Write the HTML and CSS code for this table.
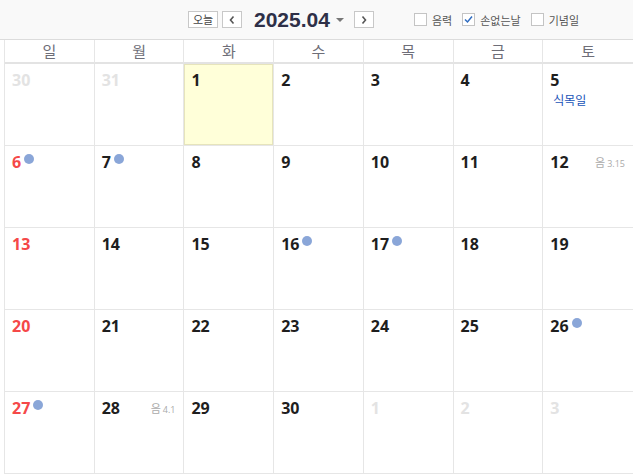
FILE: index.html
```html
<!DOCTYPE html>
<html lang="ko">
<head>
<meta charset="utf-8">
<link rel="stylesheet" href="styles.css">
</head>
<body>
<div class="topbar">
  <button class="btn today-btn">오늘</button>
  <button class="btn arrow-btn"><svg width="8" height="10" viewBox="0 0 8 10"><path d="M5.5 1.5 L2.5 5 L5.5 8.5" fill="none" stroke="#555" stroke-width="1.6"/></svg></button>
  <div class="title">2025.04</div>
  <span class="caret"></span>
  <button class="btn arrow-btn next"><svg width="8" height="10" viewBox="0 0 8 10"><path d="M2.5 1.5 L5.5 5 L2.5 8.5" fill="none" stroke="#555" stroke-width="1.6"/></svg></button>
  <div class="opts">
    <label class="opt"><span class="box"></span>음력</label>
    <label class="opt"><span class="box"><svg width="11" height="11" viewBox="0 0 11 11"><path d="M2 5.5 L4.5 8 L9 2.5" fill="none" stroke="#2f6cc0" stroke-width="1.5"/></svg></span>손없는날</label>
    <label class="opt"><span class="box"></span>기념일</label>
  </div>
</div>
<div class="cal">
  <div class="dow">일</div><div class="dow">월</div><div class="dow">화</div><div class="dow">수</div><div class="dow">목</div><div class="dow">금</div><div class="dow">토</div>

  <div class="cell"><span class="num other">30</span></div>
  <div class="cell"><span class="num other">31</span></div>
  <div class="cell today"><span class="num">1</span></div>
  <div class="cell"><span class="num">2</span></div>
  <div class="cell"><span class="num">3</span></div>
  <div class="cell"><span class="num">4</span></div>
  <div class="cell"><span class="num">5</span><div class="holiday">식목일</div></div>

  <div class="cell"><span class="num sun">6</span><span class="dot"></span></div>
  <div class="cell"><span class="num">7</span><span class="dot"></span></div>
  <div class="cell"><span class="num">8</span></div>
  <div class="cell"><span class="num">9</span></div>
  <div class="cell"><span class="num">10</span></div>
  <div class="cell"><span class="num">11</span></div>
  <div class="cell"><span class="num">12</span><span class="lunar"><span class="lk">음</span>3.15</span></div>

  <div class="cell"><span class="num sun">13</span></div>
  <div class="cell"><span class="num">14</span></div>
  <div class="cell"><span class="num">15</span></div>
  <div class="cell"><span class="num">16</span><span class="dot"></span></div>
  <div class="cell"><span class="num">17</span><span class="dot"></span></div>
  <div class="cell"><span class="num">18</span></div>
  <div class="cell"><span class="num">19</span></div>

  <div class="cell"><span class="num sun">20</span></div>
  <div class="cell"><span class="num">21</span></div>
  <div class="cell"><span class="num">22</span></div>
  <div class="cell"><span class="num">23</span></div>
  <div class="cell"><span class="num">24</span></div>
  <div class="cell"><span class="num">25</span></div>
  <div class="cell"><span class="num">26</span><span class="dot"></span></div>

  <div class="cell"><span class="num sun">27</span><span class="dot"></span></div>
  <div class="cell"><span class="num">28</span><span class="lunar"><span class="lk">음</span>4.1</span></div>
  <div class="cell"><span class="num">29</span></div>
  <div class="cell"><span class="num">30</span></div>
  <div class="cell"><span class="num other">1</span></div>
  <div class="cell"><span class="num other">2</span></div>
  <div class="cell"><span class="num other">3</span></div>
</div>
</body>
</html>
```

FILE: styles.css
```css
* { box-sizing: border-box; }
body {
  margin: 0;
  background: #fff;
  font-family: "Noto Sans CJK KR", "Noto Sans", sans-serif;
  overflow: hidden;
}
.topbar {
  height: 40px;
  background: #f9f9f9;
  border-bottom: 1px solid #dcdcdc;
  display: flex;
  align-items: center;
  padding-left: 188px;
}
.btn {
  margin: 0;
  padding: 0;
  background: #fff;
  border: 1px solid #c8c8c8;
  height: 17px;
  display: flex;
  align-items: center;
  justify-content: center;
  font-family: "Noto Sans CJK KR", sans-serif;
  font-size: 11px;
  color: #444;
  line-height: 1;
}
.today-btn { width: 30px; }
.arrow-btn { width: 20px; margin-left: 4px; }
.arrow-btn.next { margin-left: 10px; }
.title {
  margin-left: 12px;
  font-family: "Liberation Sans", Arial, sans-serif;
  font-weight: bold;
  font-size: 21px;
  color: #2e3048;
}
.caret {
  margin-left: 6px;
  width: 0;
  height: 0;
  border-left: 4px solid transparent;
  border-right: 4px solid transparent;
  border-top: 4px solid #777;
}
.opts {
  display: flex;
  margin-left: 40px;
  gap: 10px;
}
.opt {
  display: flex;
  align-items: center;
  font-size: 11px;
  color: #555;
}
.box {
  width: 13px;
  height: 13px;
  border: 1px solid #c4c4c4;
  background: #fff;
  margin-right: 5px;
  display: flex;
  align-items: center;
  justify-content: center;
}
.cal {
  margin-left: 4px;
  width: 629px;
  display: grid;
  grid-template-columns: repeat(7, 1fr);
  grid-template-rows: 24px repeat(5, 82px);
  border-left: 1px solid #e6e6e6;
}
.dow {
  border-right: 1px solid #e6e6e6;
  border-bottom: 2px solid #e3e3e3;
  text-align: center;
  font-size: 15px;
  line-height: 21px;
  color: #6e6e78;
}
.dow:nth-child(7), .cell:nth-child(7n) { border-right: none; }
.cell {
  border-right: 1px solid #e6e6e6;
  border-bottom: 1px solid #e6e6e6;
  padding: 3px 6px 0 7px;
  position: relative;
}
.cell.today {
  background: #ffffd9;
  box-shadow: inset 0 0 0 1px #e6e4bc;
}
.num {
  font-family: "Open Sans", sans-serif;
  font-weight: bold;
  font-size: 16px;
  line-height: 22px;
  color: #1e1e1e;
}
.num.sun { color: #f54848; }
.num.other { color: #e3e3e3; }
.dot {
  display: inline-block;
  width: 10px;
  height: 10px;
  border-radius: 50%;
  background: #8aa6d8;
  margin-left: 3px;
  vertical-align: 4px;
}
.holiday {
  margin-left: 3px;
  margin-top: 1px;
  font-size: 12px;
  color: #2054b8;
  line-height: 16px;
}
.lunar {
  position: absolute;
  right: 8px;
  top: 8px;
  font-family: "Open Sans", sans-serif;
  font-size: 9px;
  color: #aaa;
}
.lk {
  font-family: "Noto Sans CJK KR", sans-serif;
  font-size: 11px;
  margin-right: 2px;
}
```
